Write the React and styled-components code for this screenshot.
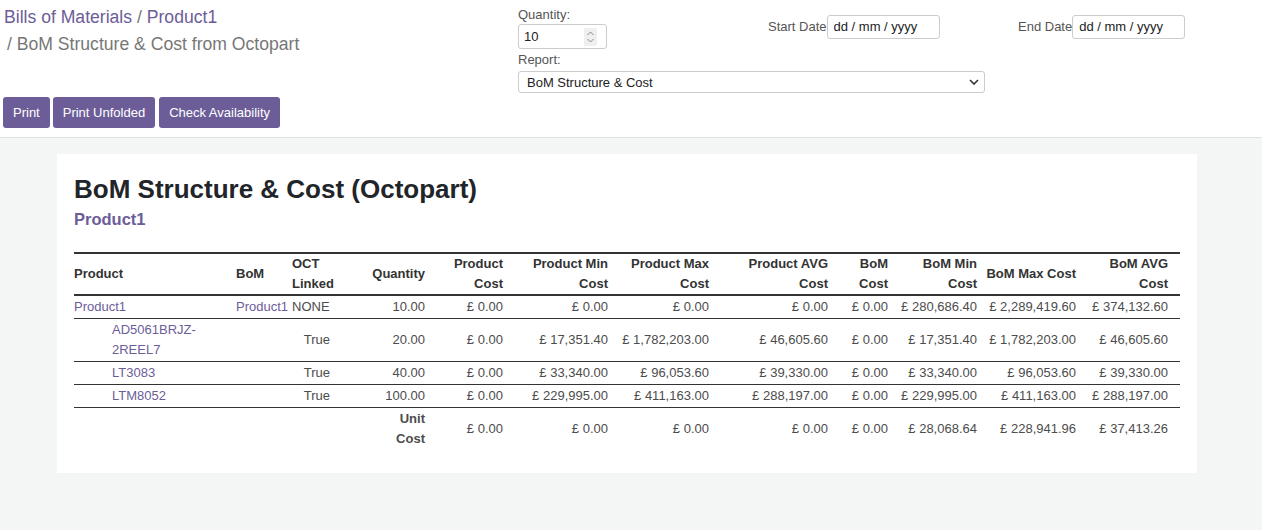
import React from "react"
import styled, { createGlobalStyle } from "styled-components"

const GlobalStyle = createGlobalStyle`
  html, body {
    margin: 0;
    padding: 0;
    background: #f4f5f5;
    font-family: "Liberation Sans", Arial, sans-serif;
    font-size: 13px;
    color: #4c4c4c;
  }
`

const purple = "#6c5d99"

const Page = styled.div`
  min-height: 530px;
  background: #f4f5f5;
`

const ControlPanel = styled.div`
  display: flex;
  align-items: flex-start;
  background: #fff;
  border-bottom: 1px solid #dee2e6;
  height: 138px;
  box-sizing: border-box;
`

const Left = styled.div`
  width: 514px;
  padding: 4px 0 0 3px;
  display: flex;
  flex-direction: column;
`

const Breadcrumb = styled.div`
  font-size: 17.6px;
  line-height: 27px;
  color: #777;
  padding-left: ${p => (p.$indent ? "4px" : "1px")};
`

const Crumb = styled.span`
  color: ${purple};
`

const Buttons = styled.div`
  display: flex;
  gap: 3px;
  margin-top: 39px;
`

const Button = styled.button`
  font-family: inherit;
  font-size: 13px;
  color: #fff;
  background: ${purple};
  border: none;
  border-radius: 3px;
  height: 31px;
  padding: 0 10px;
  cursor: pointer;
  &:last-child {
    margin-left: 1px;
  }
`

const Settings = styled.div`
  display: grid;
  grid-template-columns: 250px 250px auto;
  align-items: center;
  align-content: start;
  padding-top: 6px;
  margin-left: 1px;
`

const Field = styled.div`
  display: flex;
  flex-direction: column;
`

const Label = styled.label`
  font-size: 13px;
  line-height: 17px;
  color: #555;
  margin-bottom: ${p => (p.$gap ? "3px" : "0")};
`

const QtyBox = styled.div`
  display: flex;
  align-items: center;
  width: 89px;
  height: 25px;
  box-sizing: border-box;
  border: 1px solid #ccc;
  border-radius: 3px;
  padding: 0 9px 0 5px;
  margin-top: 1px;
  color: #222;
`

const QtyValue = styled.span`
  flex: 1;
`

const Spinner = styled.span`
  display: flex;
  align-items: center;
  justify-content: center;
  width: 13px;
  height: 18px;
  background: #efefef;
  border-radius: 2px;
`

const DateField = styled.div`
  display: flex;
  align-items: center;
  margin-top: -2px;
`

const DateLabel = styled.span`
  color: #555;
`

const DateBox = styled.input`
  width: 113px;
  height: 24px;
  box-sizing: border-box;
  border: 1px solid #ccc;
  border-radius: 3px;
  padding: 0 6px;
  font-family: inherit;
  font-size: 13px;
  color: #222;
`

const ReportField = styled.div`
  grid-column: 1 / span 3;
  display: flex;
  flex-direction: column;
  margin-top: 2px;
`

const Select = styled.select`
  width: 467px;
  height: 22px;
  box-sizing: border-box;
  border: 1px solid #ccc;
  border-radius: 3px;
  padding: 0 8px;
  font-family: inherit;
  font-size: 13px;
  color: #222;
  background-color: #fff;
  appearance: none;
  background-image: url("data:image/svg+xml,%3Csvg xmlns='http://www.w3.org/2000/svg' width='10' height='6' viewBox='0 0 10 6'%3E%3Cpath d='M1 1l4 4 4-4' fill='none' stroke='%23333' stroke-width='1.6'/%3E%3C/svg%3E");
  background-repeat: no-repeat;
  background-position: right 5px center;
`

const Main = styled.div`
  padding: 16px 0 40px 57px;
`

const Card = styled.div`
  width: 1140px;
  box-sizing: border-box;
  background: #fff;
  padding: 20px 16px 23px 17px;
`

const Title = styled.h1`
  margin: 0;
  font-size: 26px;
  line-height: 31px;
  font-weight: bold;
  color: #212529;
`

const Subtitle = styled.h3`
  margin: 3px 0 0;
  font-size: 16.5px;
  line-height: 22px;
  font-weight: bold;
  color: ${purple};
`

const Table = styled.table`
  margin-top: 22px;
  width: 1106px;
  table-layout: fixed;
  border-collapse: collapse;
  border-top: 2px solid #333;
`

const Th = styled.th`
  font-weight: bold;
  color: #333;
  line-height: 20px;
  padding: 0 2px;
  text-align: ${p => p.$align || "right"};
  vertical-align: middle;
  border-bottom: 2px solid #333;
  &:first-child {
    padding-left: 0;
  }
  &:last-child {
    padding-right: 12px;
  }
`

const Row = styled.tr`
  border-bottom: ${p => (p.$last ? "none" : "1px solid #333")};
`

const Td = styled.td`
  line-height: 20px;
  padding: 1px 2px;
  text-align: ${p => p.$align || "right"};
  vertical-align: middle;
  color: #4c4c4c;
  font-weight: ${p => (p.$bold ? "bold" : "normal")};
  &:first-child {
    padding-left: ${p => (p.$indent ? "38px" : "0")};
  }
  &:last-child {
    padding-right: 12px;
  }
`

const Link = styled.a`
  color: ${purple};
  text-decoration: none;
`

const widths = [160, 56, 42, 95, 78, 105, 101, 119, 60, 89, 99, 102]

const rows = [
  {
    product: "Product1", bom: "Product1", linked: "NONE", qty: "10.00", indent: false,
    costs: ["£ 0.00", "£ 0.00", "£ 0.00", "£ 0.00", "£ 0.00", "£ 280,686.40", "£ 2,289,419.60", "£ 374,132.60"],
  },
  {
    product: "AD5061BRJZ-2REEL7", bom: "", linked: "True", qty: "20.00", indent: true,
    costs: ["£ 0.00", "£ 17,351.40", "£ 1,782,203.00", "£ 46,605.60", "£ 0.00", "£ 17,351.40", "£ 1,782,203.00", "£ 46,605.60"],
  },
  {
    product: "LT3083", bom: "", linked: "True", qty: "40.00", indent: true,
    costs: ["£ 0.00", "£ 33,340.00", "£ 96,053.60", "£ 39,330.00", "£ 0.00", "£ 33,340.00", "£ 96,053.60", "£ 39,330.00"],
  },
  {
    product: "LTM8052", bom: "", linked: "True", qty: "100.00", indent: true,
    costs: ["£ 0.00", "£ 229,995.00", "£ 411,163.00", "£ 288,197.00", "£ 0.00", "£ 229,995.00", "£ 411,163.00", "£ 288,197.00"],
  },
]

const unitCost = ["£ 0.00", "£ 0.00", "£ 0.00", "£ 0.00", "£ 0.00", "£ 28,068.64", "£ 228,941.96", "£ 37,413.26"]

// header lines as the report wraps them
const headers = [
  [["Product"], "left"],
  [["BoM"], "left"],
  [["OCT", "Linked"], "left"],
  [["Quantity"]],
  [["Product", "Cost"]],
  [["Product Min", "Cost"]],
  [["Product Max", "Cost"]],
  [["Product AVG", "Cost"]],
  [["BoM", "Cost"]],
  [["BoM Min", "Cost"]],
  [["BoM Max Cost"]],
  [["BoM AVG", "Cost"]],
]

const SpinIcon = () => (
  <svg width="9" height="14" viewBox="0 0 9 14">
    <path d="M1.5 5L4.5 2L7.5 5M1.5 9L4.5 12L7.5 9" fill="none" stroke="#8a8a8a" strokeWidth="1" />
  </svg>
)

const App = () => {
  return (
    <Page>
      <GlobalStyle />
      <ControlPanel>
        <Left>
          <Breadcrumb>
            <Crumb>Bills of Materials</Crumb> / <Crumb>Product1</Crumb>
          </Breadcrumb>
          <Breadcrumb $indent>/ BoM Structure &amp; Cost from Octopart</Breadcrumb>
          <Buttons>
            <Button>Print</Button>
            <Button>Print Unfolded</Button>
            <Button>Check Availability</Button>
          </Buttons>
        </Left>
        <Settings>
          <Field>
            <Label>Quantity:</Label>
            <QtyBox>
              <QtyValue>10</QtyValue>
              <Spinner>
                <SpinIcon />
              </Spinner>
            </QtyBox>
          </Field>
          <DateField>
            <DateLabel>Start Date</DateLabel>
            <DateBox type="text" readOnly value="dd / mm / yyyy" />
          </DateField>
          <DateField>
            <DateLabel>End Date</DateLabel>
            <DateBox type="text" readOnly value="dd / mm / yyyy" />
          </DateField>
          <ReportField>
            <Label $gap>Report:</Label>
            <Select defaultValue="cost">
              <option value="cost">BoM Structure &amp; Cost</option>
            </Select>
          </ReportField>
        </Settings>
      </ControlPanel>
      <Main>
        <Card>
          <Title>BoM Structure &amp; Cost (Octopart)</Title>
          <Subtitle>Product1</Subtitle>
          <Table>
            <colgroup>
              {widths.map((w, i) => (
                <col key={i} style={{ width: w }} />
              ))}
            </colgroup>
            <thead>
              <tr>
                {headers.map(([lines, align], i) => (
                  <Th key={i} $align={align}>
                    {lines.map((l, j) => (
                      <React.Fragment key={j}>
                        {j > 0 && <br />}
                        {l}
                      </React.Fragment>
                    ))}
                  </Th>
                ))}
              </tr>
            </thead>
            <tbody>
              {rows.map(r => (
                <Row key={r.product}>
                  <Td $align="left" $indent={r.indent}>
                    <Link href="#">{r.product}</Link>
                  </Td>
                  <Td $align="left">{r.bom && <Link href="#">{r.bom}</Link>}</Td>
                  <Td $align={r.indent ? "right" : "left"}>{r.linked}</Td>
                  <Td>{r.qty}</Td>
                  {r.costs.map((c, i) => (
                    <Td key={i}>{c}</Td>
                  ))}
                </Row>
              ))}
              <Row $last>
                <Td />
                <Td />
                <Td />
                <Td $bold>Unit<br />Cost</Td>
                {unitCost.map((c, i) => (
                  <Td key={i}>{c}</Td>
                ))}
              </Row>
            </tbody>
          </Table>
        </Card>
      </Main>
    </Page>
  )
}

export default App
